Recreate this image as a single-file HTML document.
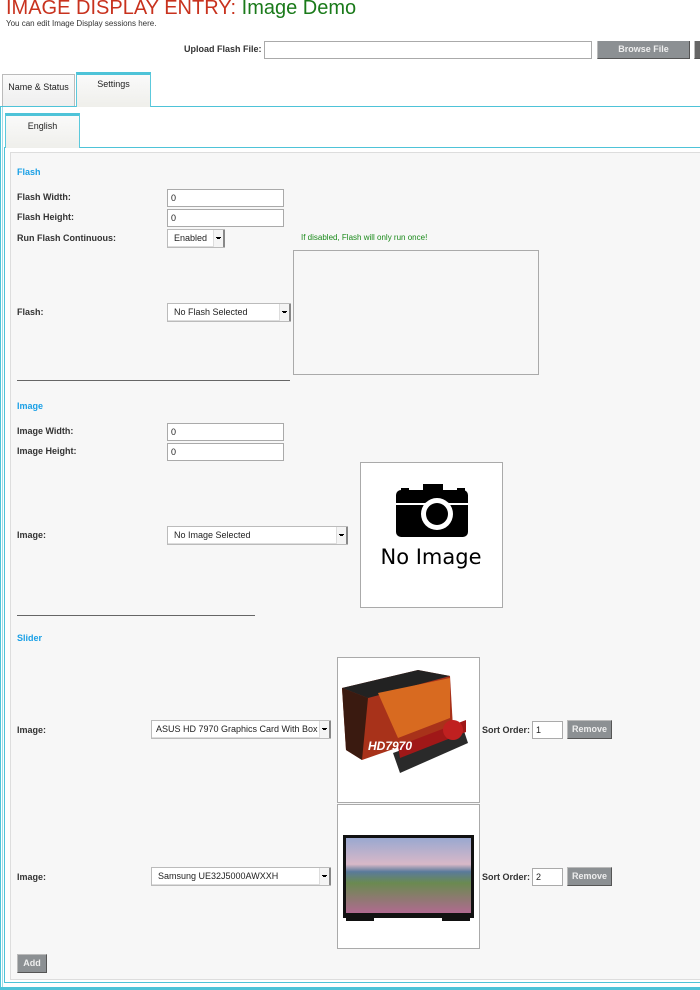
<!DOCTYPE html>
<html><head><meta charset="utf-8"><style>
*{box-sizing:border-box;margin:0;padding:0}
body{width:700px;height:990px;position:relative;background:#fff;font-family:"Liberation Sans",Arial,sans-serif;overflow:hidden;color:#222}
.a{position:absolute}
.lb{position:absolute;font-size:9px;font-weight:bold;color:#333;left:17px}
.in{position:absolute;background:#fff;border:1px solid #aaa;font-size:9px;padding:3px 3px;height:18px;line-height:10px}
.sel{position:absolute;background:#fff;border:1px solid #bbb;border-right:none;font-size:9px;padding:0 6px;height:19px;line-height:17px;box-shadow:inset 0 -1px 0 #ddd;white-space:nowrap;overflow:hidden}
.sel:after{content:"";position:absolute;right:0;top:0;width:9px;height:18px;border-left:1px solid #ddd;border-right:2px solid #888;border-bottom:2px solid #888;background:linear-gradient(#000,#000) no-repeat 3px 8px/3px 1px,linear-gradient(#000,#000) no-repeat 2px 7px/5px 1px,#f4f4f4}
.btn{position:absolute;background:#8c9093;color:#eee;font-size:9px;font-weight:bold;text-align:center;border:1px solid #bbb;border-right-color:#555;border-bottom-color:#555;line-height:17px}
.h{position:absolute;left:17px;font-size:9px;font-weight:bold;color:#1aa0e6}
.box{position:absolute;background:#fff;border:1px solid #aaa}
</style></head><body>
<div class="a" style="left:6px;top:-3px;font-size:20px;color:#c8321e;white-space:nowrap">IMAGE DISPLAY ENTRY: <span style="color:#1a7a1a">Image Demo</span></div>
<div class="a" style="left:6px;top:19px;font-size:8px;color:#333">You can edit Image Display sessions here.</div>
<div class="a" style="left:184px;top:44px;font-size:9px;font-weight:bold;color:#333">Upload Flash File:</div>
<div class="in" style="left:264px;top:41px;width:328px;height:18px"></div>
<div class="btn" style="left:597px;top:41px;width:93px;height:18px;border-top:none">Browse File</div>
<div class="btn" style="left:694px;top:41px;width:10px;height:18px;border-top:none;background:#666"></div>

<div class="a" style="left:2px;top:74px;width:73px;height:33px;background:linear-gradient(#fafafa,#eee);border:1px solid #bbb;border-bottom:none;font-size:9px;text-align:center;padding-top:7px">Name &amp; Status</div>
<div class="a" style="left:76px;top:72px;width:75px;height:35px;background:linear-gradient(#fafafa,#efefeb);border:1px solid #5cc9dc;border-top:3px solid #4ec3d8;border-bottom:none;font-size:9px;text-align:center;padding-top:4px;z-index:2">Settings</div>
<div class="a" style="left:0;top:106px;width:710px;height:884px;border:1px solid #4ec3d8;border-width:1px 0 3px 1px;background:#fff"></div>
<div class="a" style="left:2px;top:107px;width:1px;height:880px;background:#9fdde8"></div>

<div class="a" style="left:5px;top:113px;width:75px;height:35px;background:linear-gradient(#fafafa,#efefeb);border:1px solid #5cc9dc;border-top:3px solid #4ec3d8;border-bottom:none;font-size:9px;text-align:center;padding-top:5px;z-index:2">English</div>
<div class="a" style="left:4px;top:147px;width:700px;height:836px;border-top:1px solid #4ec3d8;border-left:1px solid #4ec3d8;border-bottom:1px solid #4ec3d8"></div>
<div class="a" style="left:10px;top:152px;width:700px;height:828px;background:#f7f7f7;border:1px solid #ddd"></div>

<div class="h" style="top:167px">Flash</div>
<div class="lb" style="top:192px">Flash Width:</div>
<div class="in" style="left:167px;top:189px;width:117px">0</div>
<div class="lb" style="top:212px">Flash Height:</div>
<div class="in" style="left:167px;top:209px;width:117px">0</div>
<div class="lb" style="top:233px">Run Flash Continuous:</div>
<div class="sel" style="left:167px;top:229px;width:58px">Enabled</div>
<div class="a" style="left:301px;top:233px;font-size:8px;color:#1a8a1a">If disabled, Flash will only run once!</div>
<div class="box" style="left:293px;top:250px;width:246px;height:125px;background:#f7f7f7"></div>
<div class="lb" style="top:307px">Flash:</div>
<div class="sel" style="left:167px;top:303px;width:124px">No Flash Selected</div>
<div class="a" style="left:17px;top:380px;width:273px;height:1px;background:#666"></div>

<div class="h" style="top:401px">Image</div>
<div class="lb" style="top:426px">Image Width:</div>
<div class="in" style="left:167px;top:423px;width:117px">0</div>
<div class="lb" style="top:446px">Image Height:</div>
<div class="in" style="left:167px;top:443px;width:117px">0</div>
<div class="lb" style="top:530px">Image:</div>
<div class="sel" style="left:167px;top:526px;width:181px">No Image Selected</div>
<div class="box" style="left:360px;top:462px;width:143px;height:146px">
<svg width="141" height="144" viewBox="0 0 141 144" style="position:absolute;left:0;top:0">
<rect x="40" y="25" width="8" height="4" fill="#000"/>
<rect x="96" y="25" width="8" height="4" fill="#000"/>
<rect x="35" y="27" width="72" height="47" rx="5" fill="#000"/>
<rect x="62" y="21" width="20" height="8" fill="#000"/>
<rect x="35" y="40" width="72" height="2" fill="#fff"/>
<circle cx="76" cy="51" r="16" fill="#fff"/><circle cx="76" cy="51" r="11" fill="#000"/>
<text x="70" y="101" font-family="DejaVu Sans,sans-serif" font-size="21" text-anchor="middle" fill="#000">No Image</text>
</svg></div>
<div class="a" style="left:17px;top:615px;width:238px;height:1px;background:#666"></div>

<div class="h" style="top:633px">Slider</div>
<div class="lb" style="top:725px">Image:</div>
<div class="sel" style="left:151px;top:720px;width:180px;padding:0 4px">ASUS HD 7970 Graphics Card With Box</div>
<div class="box" style="left:337px;top:657px;width:143px;height:146px">
<svg width="141" height="144" viewBox="0 0 141 144" style="position:absolute;left:0;top:0">
<polygon points="4,30 80,12 112,18 115,70 24,102 8,92" fill="#a8321a"/>
<polygon points="4,30 80,12 112,18 30,40" fill="#222"/>
<polygon points="4,30 30,40 24,102 8,92" fill="#3a1a10"/>
<polygon points="40,35 112,20 112,60 60,80" fill="#d86a20"/>
<polygon points="55,95 125,70 130,85 62,115" fill="#2a2a2a"/>
<polygon points="60,88 128,62 128,74 62,100" fill="#a01818"/>
<circle cx="115" cy="72" r="10" fill="#c02020"/>
<text x="30" y="92" font-size="12" font-weight="bold" font-style="italic" fill="#fff" font-family="Liberation Sans">HD7970</text>
</svg></div>
<div class="a" style="left:482px;top:725px;font-size:9px;font-weight:bold;color:#333">Sort Order:</div>
<div class="in" style="left:532px;top:721px;width:31px">1</div>
<div class="btn" style="left:567px;top:720px;width:45px;height:19px">Remove</div>

<div class="lb" style="top:872px">Image:</div>
<div class="sel" style="left:151px;top:867px;width:180px">Samsung UE32J5000AWXXH</div>
<div class="box" style="left:337px;top:804px;width:143px;height:145px">
<svg width="141" height="143" viewBox="0 0 141 143" style="position:absolute;left:0;top:0">
<defs><linearGradient id="g" x1="0" y1="0" x2="0" y2="1"><stop offset="0" stop-color="#9aa8d0"/><stop offset=".35" stop-color="#d8b8c8"/><stop offset=".45" stop-color="#5a7a9a"/><stop offset=".6" stop-color="#6a8a50"/><stop offset="1" stop-color="#b06a90"/></linearGradient></defs>
<rect x="5" y="30" width="131" height="83" fill="#111"/>
<rect x="8" y="33" width="125" height="75" fill="url(#g)"/>
<rect x="8" y="113" width="28" height="3" fill="#111"/><rect x="104" y="113" width="28" height="3" fill="#111"/>
</svg></div>
<div class="a" style="left:482px;top:872px;font-size:9px;font-weight:bold;color:#333">Sort Order:</div>
<div class="in" style="left:532px;top:868px;width:31px">2</div>
<div class="btn" style="left:567px;top:867px;width:45px;height:19px">Remove</div>

<div class="btn" style="left:17px;top:954px;width:30px;height:19px">Add</div>
</body></html>
